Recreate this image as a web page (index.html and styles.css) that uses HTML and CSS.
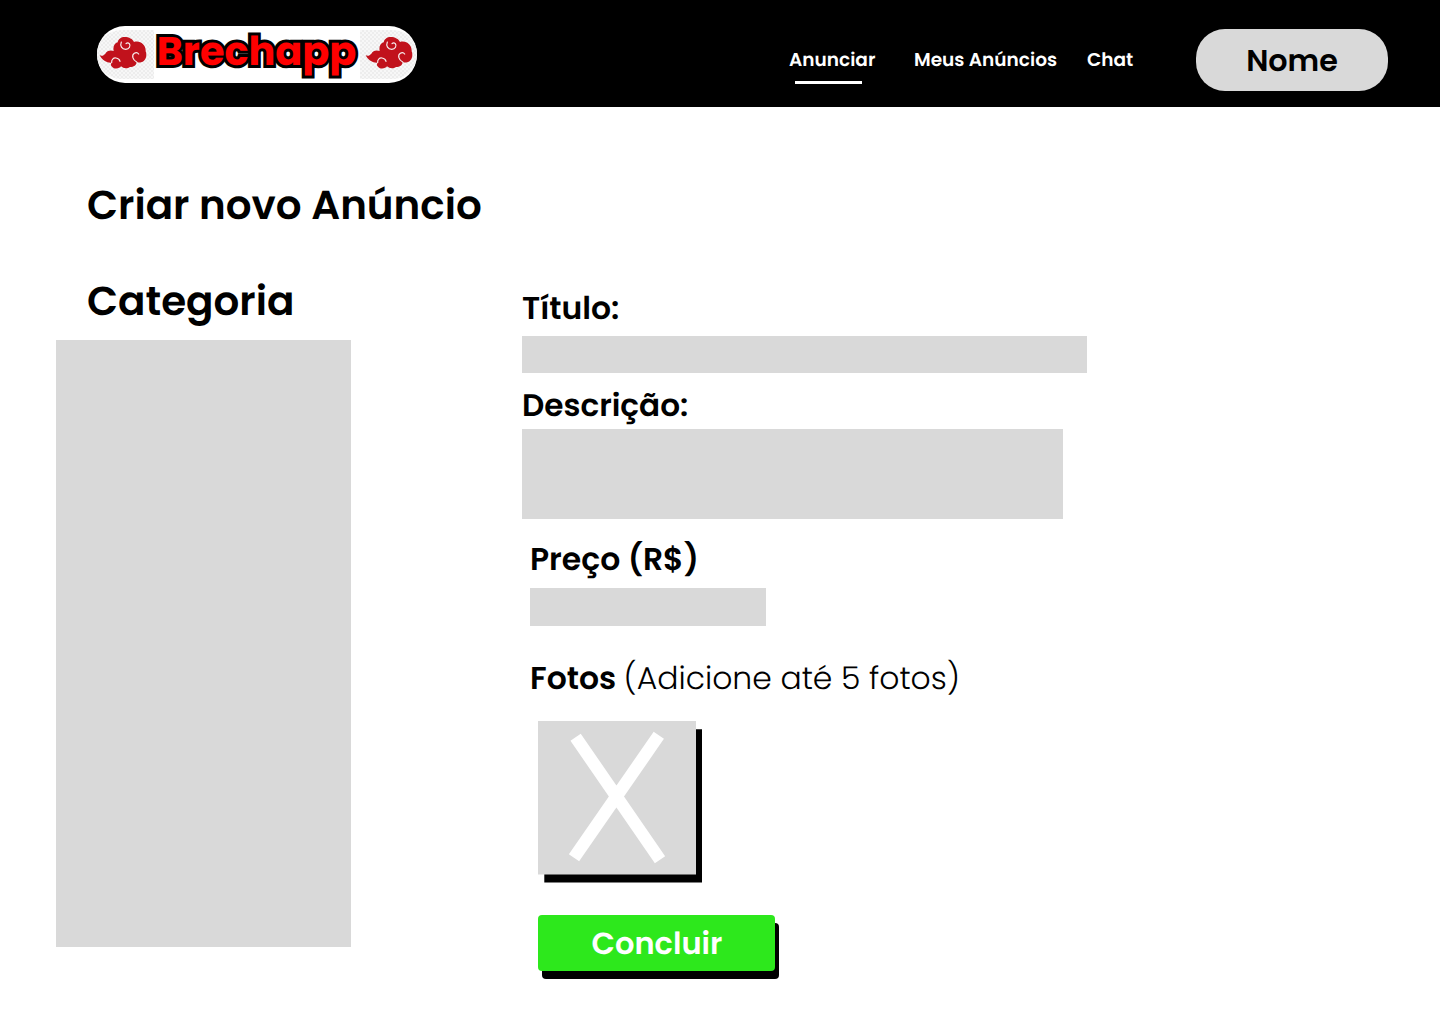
FILE: index.html
```html
<!DOCTYPE html>
<html lang="pt-BR">
<head>
<meta charset="utf-8">
<title>Brechapp - Criar novo Anúncio</title>
<link rel="stylesheet" href="styles.css">
</head>
<body>
<svg class="defs" width="0" height="0" aria-hidden="true">
  <symbol id="cloud" viewBox="26 48 144 102">
    <path fill="#c1121c" d="M28 106C36 109 40 106 45 101C50 92 60 89 70 93C67 80 73 69 82 67C84 57 92 51 103 51C116 51 127 57 131 66C149 60 167 74 166 94C172 110 164 124 152 127C148 129 142 127 139 125C139 135 130 141 119 141C111 147 99 146 92 139C87 147 71 148 65 140C61 137 61 132 63 128C50 129 36 122 28 106Z"/>
    <path fill="none" stroke="#f7eeee" stroke-width="3.6" stroke-linecap="round" d="M93 66C88 78 95 88 106 88C117 87 122 78 117 71C114 68 110 68 107 71M139 126C127 120 123 106 132 100C137 97 142 98 145 102M64 128C63 119 69 113 77 114C84 115 88 119 89 124"/>
  </symbol>
</svg>
<header class="topbar">
  <div class="logo">
    <span class="logo-tile logo-tile-left"><svg class="cloud"><use href="#cloud"/></svg></span>
    <span class="logo-text">Brechapp</span>
    <span class="logo-tile logo-tile-right"><svg class="cloud"><use href="#cloud"/></svg></span>
  </div>
  <nav class="nav">
    <a class="nav-link active">Anunciar</a>
    <a class="nav-link mine">Meus Anúncios</a>
    <a class="nav-link chat">Chat</a>
  </nav>
  <div class="user">Nome</div>
</header>
<main class="page">
  <h1 class="title">Criar novo Anúncio</h1>
  <div class="columns">
    <aside class="sidebar">
      <h2 class="category">Categoria</h2>
      <div class="category-list"></div>
    </aside>
    <form class="form">
      <div class="label">Título:</div>
      <div class="field field-title"></div>
      <div class="label label-desc">Descrição:</div>
      <div class="field field-desc"></div>
      <div class="indent">
        <div class="label label-price">Preço (R$)</div>
        <div class="field field-price"></div>
        <div class="label label-photos">Fotos&nbsp;<span class="hint">(Adicione até 5 fotos)</span></div>
        <svg class="photo" viewBox="0 0 164 162">
          <path d="M6.3 8.2H164V161.6H6.3Z"/>
          <path fill="#d9d9d9" d="M0 0H158V153.5H0Z"/>
          <path stroke="#fff" stroke-width="12.5" d="M37.6 16.2L122 138.8M120.8 14.3L36 136.8"/>
        </svg>
        <div class="submit">Concluir</div>
      </div>
    </form>
  </div>
</main>
</body>
</html>
```
FILE: styles.css
```css
* { box-sizing: border-box; }
body {
  margin: 0;
  min-height: 1024px;
  background: #fff;
  color: #000;
  font-family: Poppins, Inter, "Liberation Sans", sans-serif;
  font-weight: 600;
  text-rendering: geometricPrecision;
  white-space: nowrap;
}
.defs { display: block; height: 0; }
.topbar {
  display: flex;
  height: 107px;
  padding: 0 52px 0 97px;
  background: #000;
}
.logo {
  display: flex;
  justify-content: space-between;
  align-items: center;
  width: 320px;
  height: 57px;
  margin-top: 26px;
  border-radius: 28px;
  background: #fff;
}
.logo-tile {
  display: flex;
  align-items: center;
  width: 57px;
  height: 49px;
  background: repeating-conic-gradient(#ededed 0 25%, #f7f7f7 0 50%) 0 0 / 4px 4px;
}
.logo-tile-left { padding-left: 2px; border-radius: 25px 0 0 25px; }
.logo-tile-right { padding-left: 5px; border-radius: 0 25px 25px 0; }
.cloud { width: 48px; height: 34px; margin-top: -3px; }
.logo-text {
  font-size: 39.8px;
  font-weight: 700;
  line-height: 60px;
  margin: -8px 0 0 -1px;
  color: #f00;
  -webkit-text-stroke: 6px #000;
  paint-order: stroke fill;
}
.nav { display: flex; margin-left: 372px; padding-top: 44px; }
.nav-link {
  width: 125px;
  height: 40px;
  font-size: 18.55px;
  line-height: 33px;
  color: #fff;
}
.active::after {
  content: "";
  display: block;
  width: 67px;
  height: 3px;
  margin: 4px 0 0 6px;
  background: #fff;
}
.mine { width: 173px; }
.chat { width: 46px; }
.user {
  width: 192px;
  height: 62px;
  margin: 29px 0 0 auto;
  border-radius: 29px;
  background: #d9d9d9;
  font-size: 30.2px;
  line-height: 64px;
  text-align: center;
}
.page { padding: 68px 0 40px 56px; }
.title, .category {
  height: 60px;
  margin: 0 0 0 31px;
  font-size: 40.45px;
  font-weight: 600;
  line-height: 62px;
}
.columns { display: flex; gap: 171px; margin-top: 36px; }
.sidebar { width: 295px; }
.category-list { height: 607px; margin-top: 9px; background: #d9d9d9; }
.form { padding-top: 13px; }
.label { height: 48px; font-size: 31.45px; line-height: 51px; }
.field { background: #d9d9d9; }
.field-title { width: 565px; height: 37px; margin-top: 4px; }
.label-desc { margin-top: 8px; font-size: 31.1px; line-height: 49px; }
.field-desc { width: 541px; height: 90px; }
.indent { padding-left: 8px; }
.label-price { margin-top: 16px; }
.field-price { width: 236px; height: 38px; margin-top: 5px; }
.label-photos { margin-top: 28px; }
.hint { font-weight: 300; }
.photo {
  display: block;
  width: 164px;
  height: 162px;
  margin: 19px 0 0 8px;
}
.submit {
  width: 237px;
  height: 56px;
  margin: 32px 0 0 8px;
  padding-left: 1px;
  border-radius: 4px;
  background: #2de81c;
  box-shadow: 4px 8px 0 #000;
  color: #fff;
  font-size: 30.5px;
  line-height: 58px;
  text-align: center;
}
```
